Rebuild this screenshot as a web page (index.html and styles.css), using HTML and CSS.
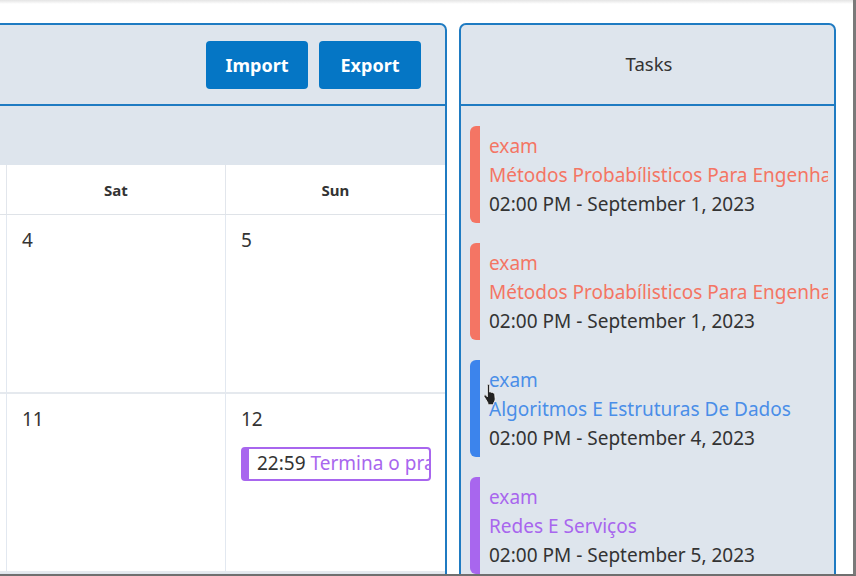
FILE: index.html
```html
<!DOCTYPE html>
<html lang="en">
<head>
<meta charset="utf-8">
<title>Calendar</title>
<link rel="stylesheet" href="styles.css">
</head>
<body>
<div class="frame">
  <div class="layout">
    <section class="card calendar">
      <header class="card-head cal-head">
        <button class="btn">Import</button>
        <button class="btn">Export</button>
      </header>
      <div class="cal-toolbar"></div>
      <div class="cal-grid">
        <div class="dow"></div>
        <div class="dow">Sat</div>
        <div class="dow">Sun</div>
        <div class="day"></div>
        <div class="day"><span class="num">4</span></div>
        <div class="day"><span class="num">5</span></div>
        <div class="day"></div>
        <div class="day"><span class="num">11</span></div>
        <div class="day">
          <span class="num">12</span>
          <div class="event"><span class="ev-time">22:59</span> <span class="ev-title">Termina o prazo de entrega</span></div>
        </div>
      </div>
    </section>
    <aside class="card tasks">
      <header class="card-head tasks-head">Tasks</header>
      <div class="task-list">
        <div class="task red">
          <div class="t-type">exam</div>
          <div class="t-title">Métodos Probabílisticos Para Engenharia</div>
          <div class="t-date">02:00 PM - September 1, 2023</div>
        </div>
        <div class="task red">
          <div class="t-type">exam</div>
          <div class="t-title">Métodos Probabílisticos Para Engenharia</div>
          <div class="t-date">02:00 PM - September 1, 2023</div>
        </div>
        <div class="task blue">
          <div class="t-type">exam</div>
          <div class="t-title">Algoritmos E Estruturas De Dados</div>
          <div class="t-date">02:00 PM - September 4, 2023</div>
          <svg class="cursor" width="15" height="21" viewBox="0 0 14 20">
            <path d="M4 1.5c0-.8.5-1.2 1.1-1.2s1.1.4 1.1 1.2v6.2l.3-.1c.6-.3 1.3-.1 1.5.5.6-.3 1.3-.1 1.5.5.6-.2 1.3 0 1.5.7l.4 4.5c.1 1.6-.4 3-1.4 4.2v1.8H4.5v-1.8L1.1 12.3c-.5-.6-.4-1.3.1-1.7.5-.4 1.2-.3 1.6.2L4 12.2z" fill="#222" stroke="#fff" stroke-width="0.8"/>
          </svg>
        </div>
        <div class="task purple">
          <div class="t-type">exam</div>
          <div class="t-title">Redes E Serviços</div>
          <div class="t-date">02:00 PM - September 5, 2023</div>
        </div>
      </div>
    </aside>
  </div>
</div>
</body>
</html>
```

FILE: styles.css
```css
* { box-sizing: border-box; }
html, body { margin: 0; padding: 0; }
body {
  font-family: "Noto Sans", "Open Sans", sans-serif;
  color: #333;
  background: #fff;
}
.frame {
  width: 856px;
  height: 576px;
  overflow: hidden;
  background: linear-gradient(#e4e4e4, #fff 4px);
  border-right: 3px solid #7a7a7a;
  border-bottom: 2px solid #6f6f6f;
}
.layout {
  display: flex;
  gap: 12px;
  padding-top: 23px;
  align-items: flex-start;
}
.card {
  border: 2px solid #1f7bc2;
  border-radius: 7px;
  background: #dee5ed;
  flex: none;
  overflow: hidden;
}
.card-head {
  height: 81px;
  border-bottom: 2px solid #1f7bc2;
}
.calendar {
  width: 661px;
  margin-left: -214px;
  height: 600px;
}
.cal-head {
  display: flex;
  justify-content: flex-end;
  align-items: center;
  gap: 11px;
  padding-right: 24px;
}
.btn {
  width: 102px;
  height: 48px;
  border: none;
  border-radius: 4px;
  background: #0576c5;
  color: #fff;
  font-family: inherit;
  font-weight: 700;
  font-size: 18px;
}
.cal-toolbar {
  height: 59px;
}
.cal-grid {
  display: grid;
  grid-template-columns: repeat(3, 1fr);
  grid-template-rows: 50px 179px 179px;
  background: #fff;
}
.dow {
  display: flex;
  align-items: center;
  justify-content: center;
  font-size: 15px;
  font-weight: 700;
  color: #333;
  border-right: 1px solid #e2e6ec;
  border-bottom: 1px solid #dfe3e8;
}
.day {
  padding: 12px 14px 0 15px;
  border-right: 1px solid #e2e8f0;
  border-bottom: 2px solid #e5e9ee;
  display: flex;
  flex-direction: column;
  align-items: stretch;
  min-width: 0;
}
.dow:nth-child(3n), .day:nth-child(3n) { border-right: none; }
.num {
  font-size: 19px;
  line-height: 26px;
  color: #333;
}
.event {
  margin-top: 15px;
  height: 34px;
  border: 2px solid #a866ee;
  border-left-width: 8px;
  border-radius: 4px;
  background: #fff;
  font-size: 19px;
  line-height: 29px;
  white-space: nowrap;
  overflow: hidden;
  padding-left: 8px;
}
.ev-time { color: #333; }
.ev-title { color: #a866ee; }

.tasks {
  width: 377px;
  height: 600px;
}
.tasks-head {
  display: flex;
  align-items: center;
  justify-content: center;
  font-size: 18.5px;
  color: #333;
  padding-bottom: 2px;
  padding-left: 3px;
}
.task-list {
  display: flex;
  flex-direction: column;
  gap: 20px;
  padding: 20px 6px 0 9px;
}
.task {
  position: relative;
  border-left: 10px solid;
  border-radius: 6px;
  padding: 6px 0 4px 9px;
  font-size: 19px;
  line-height: 29px;
  white-space: nowrap;
  overflow: hidden;
}
.t-date { color: #333; }
.red { border-color: #f47564; color: #f47564; }
.blue { border-color: #3c84ec; color: #4a8ee8; }
.purple { border-color: #a866ee; color: #a866ee; }
.cursor {
  position: absolute;
  left: 3px;
  top: 24px;
}
```
